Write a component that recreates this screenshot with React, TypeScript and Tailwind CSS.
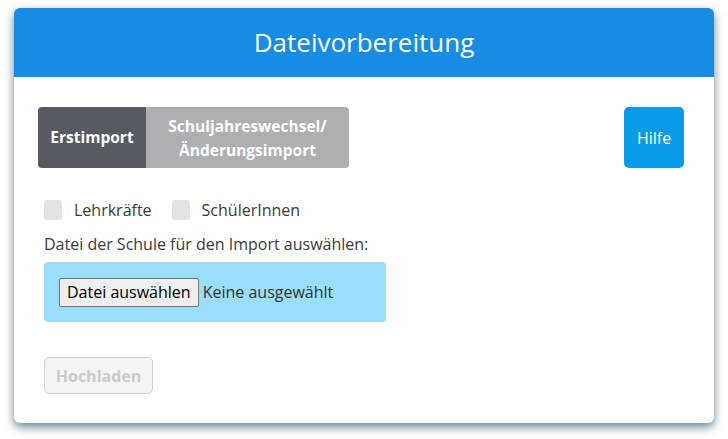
import React, { useState } from 'react';

const App: React.FC = () => {
  const [mode, setMode] = useState<'erst' | 'wechsel'>('erst');
  const [teachers, setTeachers] = useState(false);
  const [students, setStudents] = useState(false);

  return (
    <div className="min-h-screen bg-white pt-2 px-[14px]" style={{ fontFamily: '"Open Sans", sans-serif' }}>
      <div className="w-[700px] rounded-md bg-white overflow-hidden shadow-[0_4px_10px_rgba(20,60,90,0.65)]">
        {/* Header */}
        <div className="h-[69px] bg-[#168de2] flex items-center justify-center">
          <h1 className="text-[26px] text-white">Dateivorbereitung</h1>
        </div>

        <div className="pl-6 pr-[30px] pt-[30px] pb-[29px]">
          {/* Mode tabs + help */}
          <div className="flex items-start justify-between">
            <div className="flex h-[61px]">
              <button
                onClick={() => setMode('erst')}
                className={`w-[108px] rounded-l-[4px] text-[15.5px] font-bold text-white ${mode === 'erst' ? 'bg-[#565b62]' : 'bg-[#adafb2]'}`}
              >
                Erstimport
              </button>
              <button
                onClick={() => setMode('wechsel')}
                className={`w-[203px] rounded-r-[4px] text-[15.5px] font-bold leading-6 text-white ${mode === 'wechsel' ? 'bg-[#565b62]' : 'bg-[#adafb2]'}`}
              >
                Schuljahreswechsel/
                <br />
                Änderungsimport
              </button>
            </div>
            <button className="w-[60px] h-[61px] rounded-[5px] bg-[#0a9be8] text-white text-base">Hilfe</button>
          </div>

          {/* Target selection */}
          <div className="flex items-center mt-[30px] pl-[6px] text-base text-[#3a3a3a]">
            <label className="flex items-center cursor-pointer">
              <span
                onClick={() => setTeachers(!teachers)}
                className={`w-[18px] h-5 rounded-[3px] ${teachers ? 'bg-[#168de2]' : 'bg-[#e2e3e5]'}`}
              />
              <span className="ml-3">Lehrkräfte</span>
            </label>
            <label className="flex items-center cursor-pointer ml-5">
              <span
                onClick={() => setStudents(!students)}
                className={`w-[18px] h-5 rounded-[3px] ${students ? 'bg-[#168de2]' : 'bg-[#e2e3e5]'}`}
              />
              <span className="ml-3">SchülerInnen</span>
            </label>
          </div>

          <p className="mt-[10px] pl-[6px] text-base text-[#3a3a3a]">Datei der Schule für den Import auswählen:</p>

          {/* File picker */}
          <div className="ml-[6px] mt-[6px] w-[342px] h-[60px] rounded-[4px] bg-[#9bdefa] flex items-center pl-[15px]">
            <button className="h-[29px] px-[7px] border border-[#767676] rounded-[2px] bg-[#efefef] text-base text-black">
              Datei auswählen
            </button>
            <span className="ml-[4px] text-base text-[#333]">Keine ausgewählt</span>
          </div>

          <button
            disabled
            className="ml-[6px] mt-[35px] w-[109px] h-[37px] rounded-[5px] border border-[#d0d2d5] bg-[#f4f4f6] text-base font-bold text-[#c9cacc]"
          >
            Hochladen
          </button>
        </div>
      </div>
    </div>
  );
};

export default App;
